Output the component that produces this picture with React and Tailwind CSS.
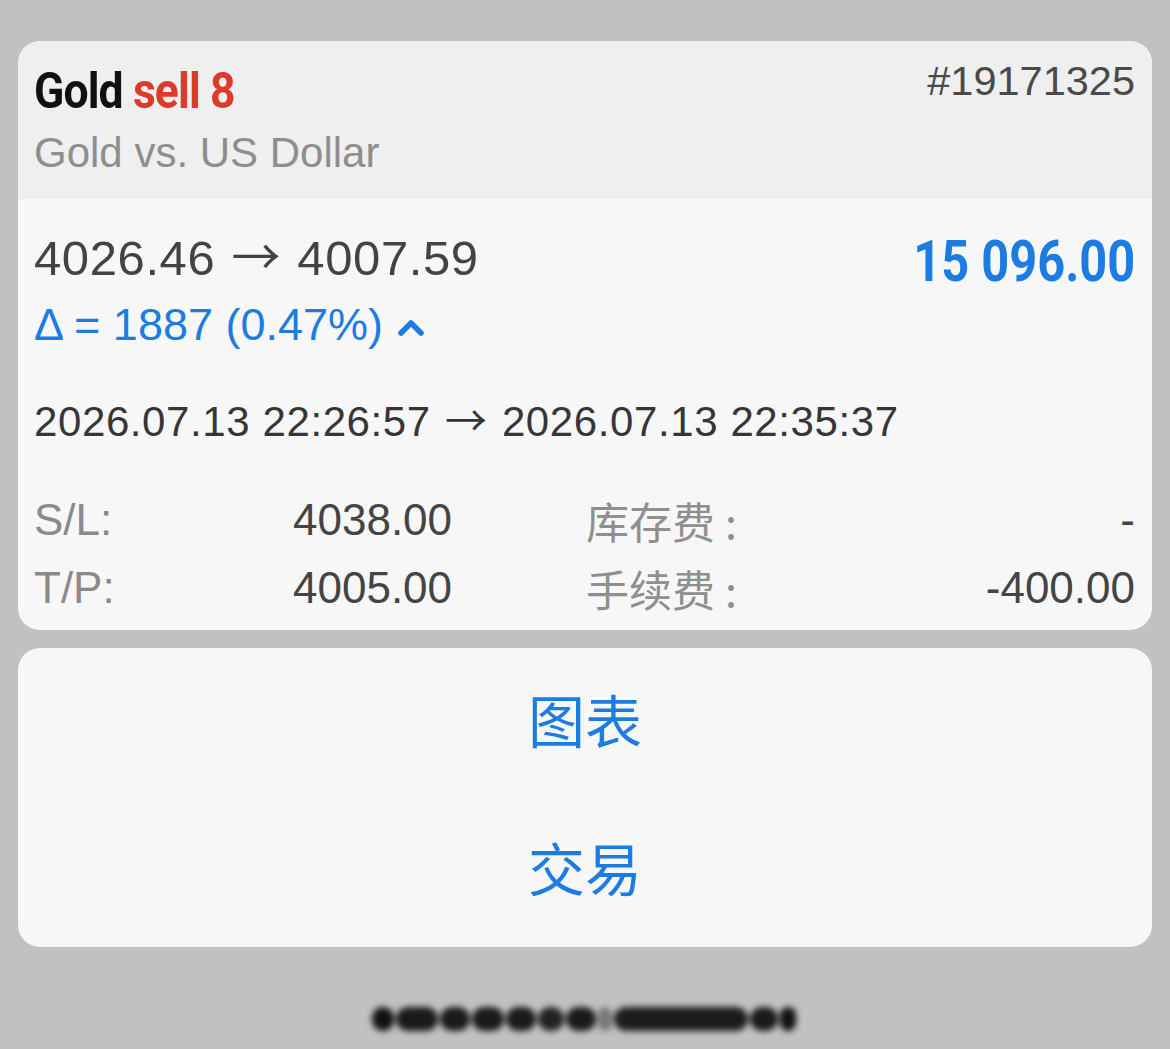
import React from 'react';

const sans = "font-['Liberation_Sans','Helvetica_Neue',Arial,'Noto_Sans_CJK_SC',sans-serif]";
const cjk = "font-['Noto_Sans_CJK_SC',sans-serif]";
const narrow = "font-['Roboto','Noto_Sans',sans-serif]";

const rows = [
  { label: 'S/L:', value: '4038.00', extra: '库存费', extraValue: '-' },
  { label: 'T/P:', value: '4005.00', extra: '手续费', extraValue: '-400.00' },
];

// blurred scribble blobs along the bottom
const blobs = [
  { w: 'w-[22px]', tone: 'bg-[#111]' },
  { w: 'w-[42px]', tone: 'bg-[#1a1a1a]' },
  { w: 'w-[30px]', tone: 'bg-[#1a1a1a]' },
  { w: 'w-[32px]', tone: 'bg-[#1a1a1a]' },
  { w: 'w-[30px]', tone: 'bg-[#1a1a1a]' },
  { w: 'w-[26px]', tone: 'bg-[#222]' },
  { w: 'w-[30px]', tone: 'bg-[#1a1a1a]' },
  { w: 'w-[14px]', tone: 'bg-[#777]' },
  { w: 'w-[134px]', tone: 'bg-[#1c1c1c]' },
  { w: 'w-[28px]', tone: 'bg-[#1a1a1a]' },
  { w: 'w-[16px]', tone: 'bg-[#111]' },
];

const Arrow = () => <span className={`${cjk} mx-[2px]`}>→</span>;

export default function App() {
  return (
    <div className={`w-[1170px] h-[1049px] bg-[#c1c1c1] px-[18px] pt-[41px] overflow-hidden ${sans}`}>
      {/* position card */}
      <div className="rounded-[22px] overflow-hidden bg-[#f7f7f7]">
        <div className="bg-[#efefef] h-[158px] pl-[16px] pr-[17px] pt-[22px] flex justify-between">
          <div>
            <div className={`${narrow} font-bold text-[50px] leading-[56px] tracking-[-1px] inline-block origin-left scale-x-[0.89] whitespace-nowrap`}>
              <span className="text-[#111]">Gold </span>
              <span className="text-[#dc3a2b]">sell 8</span>
            </div>
            <div className="text-[#8e8e8e] text-[42px] leading-[44px] mt-[12px]">Gold vs. US Dollar</div>
          </div>
          <div className="text-[#4a4a4a] text-[41.5px] leading-[44px] mt-[-4px]">#19171325</div>
        </div>

        <div className="pl-[16px] pr-[17px] pt-[26px] pb-[18px]">
          <div className="flex justify-between items-start">
            <div className="text-[#434343] text-[49px] leading-[58px] tracking-[0.6px] whitespace-nowrap">
              4026.46 <Arrow /> 4007.59
            </div>
            <div className={`${narrow} font-bold text-[#1d7ce2] text-[58px] leading-[64px] inline-block origin-right scale-x-[0.84] whitespace-nowrap mt-[4px]`}>
              15 096.00
            </div>
          </div>
          <div className="flex items-center text-[#1d7ce2] text-[45px] leading-[48px] mt-[8px]">
            <span>Δ = 1887 (0.47%)</span>
            <svg className="ml-[14px] mt-[4px]" width="28" height="18" viewBox="0 0 28 18">
              <path d="M4 15 L14 5 L24 15" fill="none" stroke="#1d7ce2" strokeWidth="5.5" strokeLinecap="round" strokeLinejoin="round" />
            </svg>
          </div>
          <div className="text-[#363636] text-[42px] leading-[48px] tracking-[0.6px] mt-[45px] whitespace-nowrap">
            2026.07.13 22:26:57 <Arrow /> 2026.07.13 22:35:37
          </div>

          <div className="mt-[50px] flex flex-col gap-[20px]">
            {rows.map((r) => (
              <div key={r.label} className="flex items-center h-[48px] text-[44px] leading-[48px]">
                <span className="w-[259px] text-[#8a8a8a]">{r.label}</span>
                <span className="w-[293px] text-[#444]">{r.value}</span>
                <span className={`${cjk} text-[#8f8f8f] text-[43px] flex-1`}>
                  {r.extra}
                  <span className="ml-[10px]">:</span>
                </span>
                <span className="text-[#444]">{r.extraValue}</span>
              </div>
            ))}
          </div>
        </div>
      </div>

      {/* actions */}
      <div className="mt-[18px] h-[299px] rounded-[22px] bg-[#f7f7f7] flex flex-col items-center justify-center gap-[88px] pb-[12px]">
        <button className={`${cjk} text-[#1d7ce2] text-[57px] leading-[60px]`}>图表</button>
        <button className={`${cjk} text-[#1d7ce2] text-[57px] leading-[60px]`}>交易</button>
      </div>

      <div className="mt-[60px] flex justify-center">
        <div className="flex items-center gap-[2px] blur-[3px] ml-[-3px]">
          {blobs.map((b, i) => (
            <div key={i} className={`${b.w} h-[24px] rounded-full ${b.tone}`} />
          ))}
        </div>
      </div>
    </div>
  );
}
